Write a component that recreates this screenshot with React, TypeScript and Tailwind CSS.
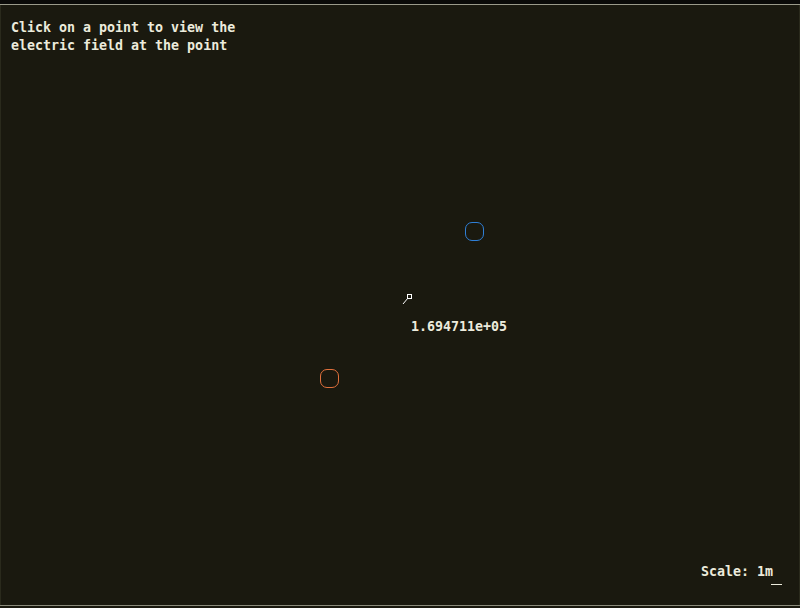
import React from "react";

export default function App() {
  const mono = { fontFamily: '"DejaVu Sans Mono", "Liberation Mono", monospace' };
  return (
    <div className="w-[800px] h-[608px] bg-[#0c0c08] flex flex-col overflow-hidden" style={mono}>
      <div className="h-[4px] bg-[#0a0a08]" />
      <div className="h-[1px] bg-[#9a9a8a]" />
      <div className="relative flex-1 bg-[#1a190f] border-x border-[#2a2a1c] pl-[10px] pt-[14px]">
        <div className="text-[13.3px] leading-[18px] font-bold text-[#ecebdc] whitespace-pre">
          {"Click on a point to view the\nelectric field at the point"}
        </div>
        <div className="absolute left-[464px] top-[217px] w-[19px] h-[19px] rounded-[7px] border-[1.5px] border-[#2f7fd6]" />
        <div className="absolute left-[319px] top-[364px] w-[19px] h-[19px] rounded-[7px] border-[1.5px] border-[#e0703c]" />
        <svg className="absolute left-[398px] top-[288px]" width="16" height="16" viewBox="0 0 16 16">
          <rect x="8.5" y="1.5" width="4" height="4" fill="none" stroke="#ffffff" strokeWidth="1" />
          <line x1="9" y1="5" x2="4" y2="11" stroke="#ffffff" strokeWidth="1" />
        </svg>
        <div className="absolute left-[410px] top-[313px] text-[13.3px] leading-[18px] font-bold text-[#ecebdc]">
          1.694711e+05
        </div>
        <div className="absolute left-[700px] top-[558px] text-[13.3px] leading-[18px] font-bold text-[#ecebdc]">
          Scale: 1m
        </div>
        <div className="absolute left-[770px] top-[579px] w-[11px] h-[1px] bg-[#ecebdc]" />
      </div>
      <div className="h-[1px] bg-[#8a8a7a]" />
      <div className="h-[2px] bg-[#1a190f]" />
    </div>
  );
}
